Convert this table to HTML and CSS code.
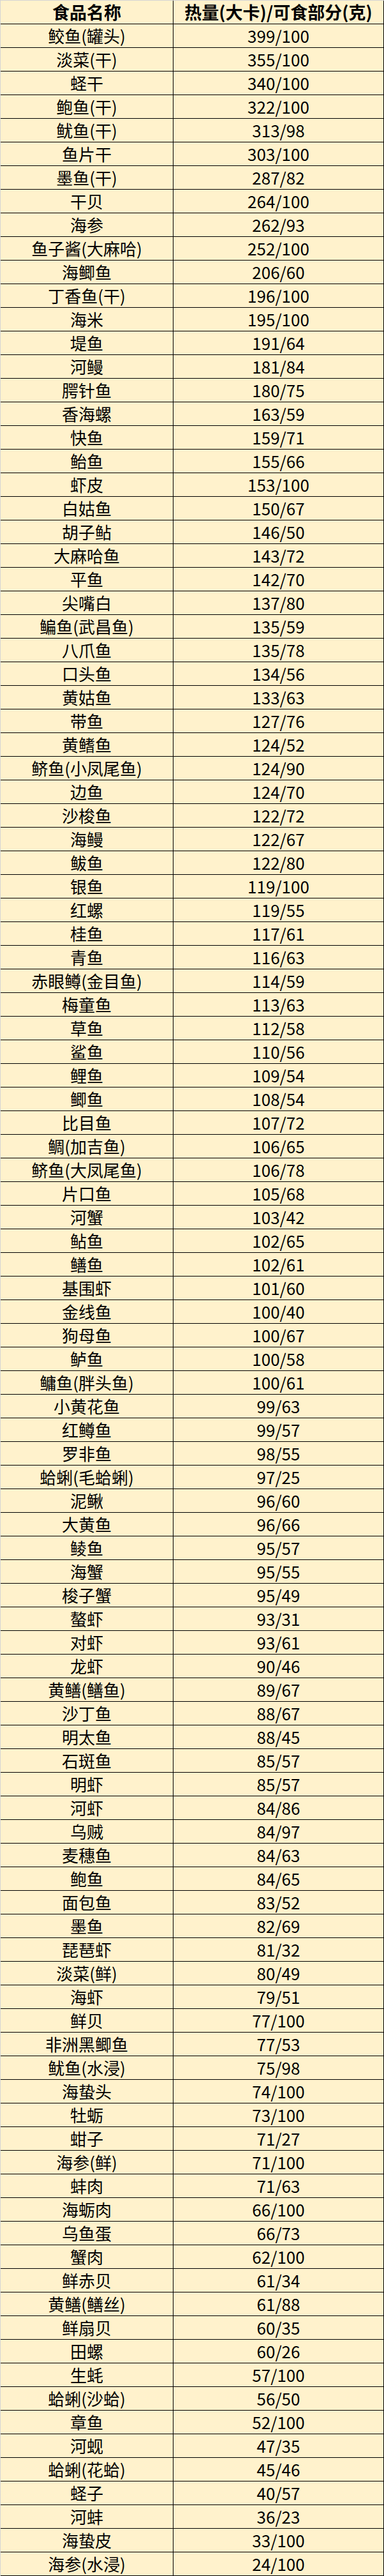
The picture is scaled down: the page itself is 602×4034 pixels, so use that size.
FILE: index.html
```html
<!DOCTYPE html>
<html lang="zh-CN">
<head>
<meta charset="utf-8">
<title>食品热量表</title>
<link rel="stylesheet" href="styles.css">
</head>
<body>
<div class="sheet">
  <div class="row head"><div class="c name">食品名称</div><div class="c val">热量(大卡)/可食部分(克)</div></div>
  <div class="row"><div class="c name">鲛鱼(罐头)</div><div class="c val">399/100</div></div>
  <div class="row"><div class="c name">淡菜(干)</div><div class="c val">355/100</div></div>
  <div class="row"><div class="c name">蛏干</div><div class="c val">340/100</div></div>
  <div class="row"><div class="c name">鲍鱼(干)</div><div class="c val">322/100</div></div>
  <div class="row"><div class="c name">鱿鱼(干)</div><div class="c val">313/98</div></div>
  <div class="row"><div class="c name">鱼片干</div><div class="c val">303/100</div></div>
  <div class="row"><div class="c name">墨鱼(干)</div><div class="c val">287/82</div></div>
  <div class="row"><div class="c name">干贝</div><div class="c val">264/100</div></div>
  <div class="row"><div class="c name">海参</div><div class="c val">262/93</div></div>
  <div class="row"><div class="c name">鱼子酱(大麻哈)</div><div class="c val">252/100</div></div>
  <div class="row"><div class="c name">海鲫鱼</div><div class="c val">206/60</div></div>
  <div class="row"><div class="c name">丁香鱼(干)</div><div class="c val">196/100</div></div>
  <div class="row"><div class="c name">海米</div><div class="c val">195/100</div></div>
  <div class="row"><div class="c name">堤鱼</div><div class="c val">191/64</div></div>
  <div class="row"><div class="c name">河鳗</div><div class="c val">181/84</div></div>
  <div class="row"><div class="c name">腭针鱼</div><div class="c val">180/75</div></div>
  <div class="row"><div class="c name">香海螺</div><div class="c val">163/59</div></div>
  <div class="row"><div class="c name">快鱼</div><div class="c val">159/71</div></div>
  <div class="row"><div class="c name">鲐鱼</div><div class="c val">155/66</div></div>
  <div class="row"><div class="c name">虾皮</div><div class="c val">153/100</div></div>
  <div class="row"><div class="c name">白姑鱼</div><div class="c val">150/67</div></div>
  <div class="row"><div class="c name">胡子鲇</div><div class="c val">146/50</div></div>
  <div class="row"><div class="c name">大麻哈鱼</div><div class="c val">143/72</div></div>
  <div class="row"><div class="c name">平鱼</div><div class="c val">142/70</div></div>
  <div class="row"><div class="c name">尖嘴白</div><div class="c val">137/80</div></div>
  <div class="row"><div class="c name">鳊鱼(武昌鱼)</div><div class="c val">135/59</div></div>
  <div class="row"><div class="c name">八爪鱼</div><div class="c val">135/78</div></div>
  <div class="row"><div class="c name">口头鱼</div><div class="c val">134/56</div></div>
  <div class="row"><div class="c name">黄姑鱼</div><div class="c val">133/63</div></div>
  <div class="row"><div class="c name">带鱼</div><div class="c val">127/76</div></div>
  <div class="row"><div class="c name">黄鳍鱼</div><div class="c val">124/52</div></div>
  <div class="row"><div class="c name">鲚鱼(小凤尾鱼)</div><div class="c val">124/90</div></div>
  <div class="row"><div class="c name">边鱼</div><div class="c val">124/70</div></div>
  <div class="row"><div class="c name">沙梭鱼</div><div class="c val">122/72</div></div>
  <div class="row"><div class="c name">海鳗</div><div class="c val">122/67</div></div>
  <div class="row"><div class="c name">鲅鱼</div><div class="c val">122/80</div></div>
  <div class="row"><div class="c name">银鱼</div><div class="c val">119/100</div></div>
  <div class="row"><div class="c name">红螺</div><div class="c val">119/55</div></div>
  <div class="row"><div class="c name">桂鱼</div><div class="c val">117/61</div></div>
  <div class="row"><div class="c name">青鱼</div><div class="c val">116/63</div></div>
  <div class="row"><div class="c name">赤眼鳟(金目鱼)</div><div class="c val">114/59</div></div>
  <div class="row"><div class="c name">梅童鱼</div><div class="c val">113/63</div></div>
  <div class="row"><div class="c name">草鱼</div><div class="c val">112/58</div></div>
  <div class="row"><div class="c name">鲨鱼</div><div class="c val">110/56</div></div>
  <div class="row"><div class="c name">鲤鱼</div><div class="c val">109/54</div></div>
  <div class="row"><div class="c name">鲫鱼</div><div class="c val">108/54</div></div>
  <div class="row"><div class="c name">比目鱼</div><div class="c val">107/72</div></div>
  <div class="row"><div class="c name">鲷(加吉鱼)</div><div class="c val">106/65</div></div>
  <div class="row"><div class="c name">鲚鱼(大凤尾鱼)</div><div class="c val">106/78</div></div>
  <div class="row"><div class="c name">片口鱼</div><div class="c val">105/68</div></div>
  <div class="row"><div class="c name">河蟹</div><div class="c val">103/42</div></div>
  <div class="row"><div class="c name">鲇鱼</div><div class="c val">102/65</div></div>
  <div class="row"><div class="c name">鳝鱼</div><div class="c val">102/61</div></div>
  <div class="row"><div class="c name">基围虾</div><div class="c val">101/60</div></div>
  <div class="row"><div class="c name">金线鱼</div><div class="c val">100/40</div></div>
  <div class="row"><div class="c name">狗母鱼</div><div class="c val">100/67</div></div>
  <div class="row"><div class="c name">鲈鱼</div><div class="c val">100/58</div></div>
  <div class="row"><div class="c name">鳙鱼(胖头鱼)</div><div class="c val">100/61</div></div>
  <div class="row"><div class="c name">小黄花鱼</div><div class="c val">99/63</div></div>
  <div class="row"><div class="c name">红鳟鱼</div><div class="c val">99/57</div></div>
  <div class="row"><div class="c name">罗非鱼</div><div class="c val">98/55</div></div>
  <div class="row"><div class="c name">蛤蜊(毛蛤蜊)</div><div class="c val">97/25</div></div>
  <div class="row"><div class="c name">泥鳅</div><div class="c val">96/60</div></div>
  <div class="row"><div class="c name">大黄鱼</div><div class="c val">96/66</div></div>
  <div class="row"><div class="c name">鲮鱼</div><div class="c val">95/57</div></div>
  <div class="row"><div class="c name">海蟹</div><div class="c val">95/55</div></div>
  <div class="row"><div class="c name">梭子蟹</div><div class="c val">95/49</div></div>
  <div class="row"><div class="c name">螯虾</div><div class="c val">93/31</div></div>
  <div class="row"><div class="c name">对虾</div><div class="c val">93/61</div></div>
  <div class="row"><div class="c name">龙虾</div><div class="c val">90/46</div></div>
  <div class="row"><div class="c name">黄鳝(鳝鱼)</div><div class="c val">89/67</div></div>
  <div class="row"><div class="c name">沙丁鱼</div><div class="c val">88/67</div></div>
  <div class="row"><div class="c name">明太鱼</div><div class="c val">88/45</div></div>
  <div class="row"><div class="c name">石斑鱼</div><div class="c val">85/57</div></div>
  <div class="row"><div class="c name">明虾</div><div class="c val">85/57</div></div>
  <div class="row"><div class="c name">河虾</div><div class="c val">84/86</div></div>
  <div class="row"><div class="c name">乌贼</div><div class="c val">84/97</div></div>
  <div class="row"><div class="c name">麦穗鱼</div><div class="c val">84/63</div></div>
  <div class="row"><div class="c name">鲍鱼</div><div class="c val">84/65</div></div>
  <div class="row"><div class="c name">面包鱼</div><div class="c val">83/52</div></div>
  <div class="row"><div class="c name">墨鱼</div><div class="c val">82/69</div></div>
  <div class="row"><div class="c name">琵琶虾</div><div class="c val">81/32</div></div>
  <div class="row"><div class="c name">淡菜(鲜)</div><div class="c val">80/49</div></div>
  <div class="row"><div class="c name">海虾</div><div class="c val">79/51</div></div>
  <div class="row"><div class="c name">鲜贝</div><div class="c val">77/100</div></div>
  <div class="row"><div class="c name">非洲黑鲫鱼</div><div class="c val">77/53</div></div>
  <div class="row"><div class="c name">鱿鱼(水浸)</div><div class="c val">75/98</div></div>
  <div class="row"><div class="c name">海蛰头</div><div class="c val">74/100</div></div>
  <div class="row"><div class="c name">牡蛎</div><div class="c val">73/100</div></div>
  <div class="row"><div class="c name">蚶子</div><div class="c val">71/27</div></div>
  <div class="row"><div class="c name">海参(鲜)</div><div class="c val">71/100</div></div>
  <div class="row"><div class="c name">蚌肉</div><div class="c val">71/63</div></div>
  <div class="row"><div class="c name">海蛎肉</div><div class="c val">66/100</div></div>
  <div class="row"><div class="c name">乌鱼蛋</div><div class="c val">66/73</div></div>
  <div class="row"><div class="c name">蟹肉</div><div class="c val">62/100</div></div>
  <div class="row"><div class="c name">鲜赤贝</div><div class="c val">61/34</div></div>
  <div class="row"><div class="c name">黄鳝(鳝丝)</div><div class="c val">61/88</div></div>
  <div class="row"><div class="c name">鲜扇贝</div><div class="c val">60/35</div></div>
  <div class="row"><div class="c name">田螺</div><div class="c val">60/26</div></div>
  <div class="row"><div class="c name">生蚝</div><div class="c val">57/100</div></div>
  <div class="row"><div class="c name">蛤蜊(沙蛤)</div><div class="c val">56/50</div></div>
  <div class="row"><div class="c name">章鱼</div><div class="c val">52/100</div></div>
  <div class="row"><div class="c name">河蚬</div><div class="c val">47/35</div></div>
  <div class="row"><div class="c name">蛤蜊(花蛤)</div><div class="c val">45/46</div></div>
  <div class="row"><div class="c name">蛏子</div><div class="c val">40/57</div></div>
  <div class="row"><div class="c name">河蚌</div><div class="c val">36/23</div></div>
  <div class="row"><div class="c name">海蛰皮</div><div class="c val">33/100</div></div>
  <div class="row"><div class="c name">海参(水浸)</div><div class="c val">24/100</div></div>
</div>
</body>
</html>
```
FILE: styles.css
```css
html, body {
  margin: 0;
  padding: 0;
  background: #fff2cc;
}
.sheet {
  width: 601px;
  border-left: 1px solid #d4d4d4;
  border-top: 1px solid #d4d4d4;
  background: #fff2cc;
  font-family: "Noto Sans CJK SC", "Noto Sans", sans-serif;
  color: #000;
}
.row {
  display: flex;
  height: 36px;
  border-bottom: 1px solid #000;
}
.c {
  text-align: center;
  white-space: nowrap;
  font-size: 26px;
  line-height: 36px;
}
.name {
  width: 270px;
  border-right: 1px solid #000;
}
.val {
  width: 329px;
  border-right: 1px solid #000;
}
.head .c {
  font-size: 27px;
  font-weight: bold;
  line-height: 36px;
}
```
